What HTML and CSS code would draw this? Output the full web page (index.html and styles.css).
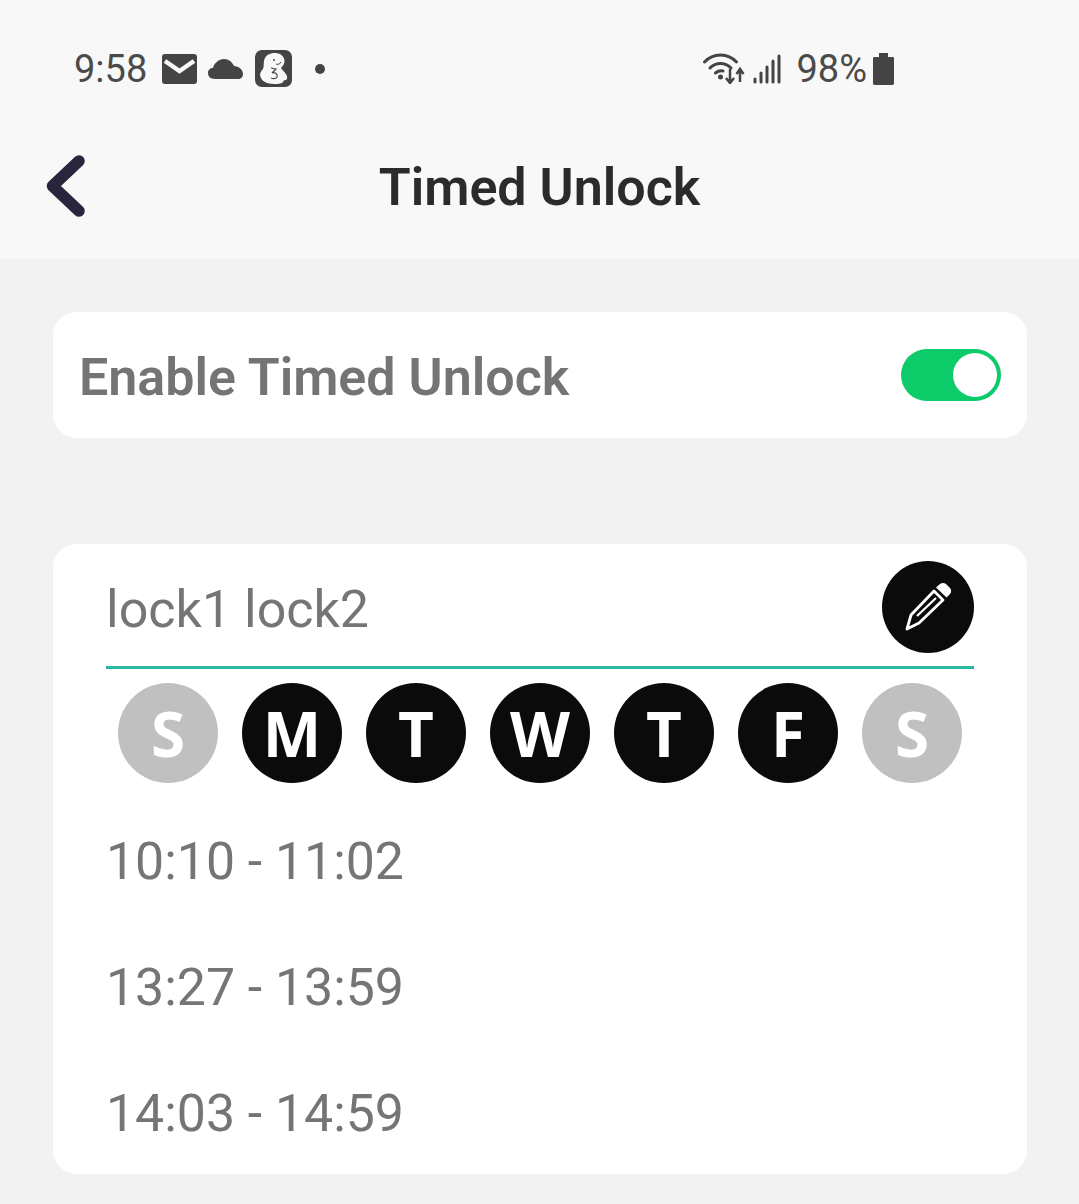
FILE: index.html
```html
<!DOCTYPE html>
<html lang="en">
<head>
  <meta charset="UTF-8">
  <meta name="viewport" content="width=device-width, initial-scale=1.0">
  <title>Timed Unlock</title>
  <link rel="stylesheet" href="styles.css">
</head>
<body>
  <div class="top">
    <div class="status">
      <div class="status-left">
        <span class="clock">9:58</span>
        <svg class="ic-mail" viewBox="0 0 35 30"><rect width="35" height="30" rx="3" fill="#444"/><path d="M3 7 L17.500 17 L32 7" fill="none" stroke="#f8f8f8" stroke-width="4.500"/></svg>
        <svg class="ic-cloud" viewBox="0 0 35 20"><path d="M7 20 C2 20 0 17 0 14 C0 11 2 9 5 9 C6 4 11 0 16 0 C21 0 24 3 26 7 C31 7 35 11 35 15 C35 18 33 20 30 20 Z" fill="#444"/></svg>
        <svg class="ic-app" viewBox="0 0 37 37"><rect width="37" height="37" rx="7" fill="#444"/><path d="M9 11 C10 5 15 3 20 3 C26 3 30 7 29.500 12 C29 15 27 17 26 18 C27 20 30 22 32 26 C33 29 31 31 29 30 C28.500 33 25 34 21 34 C15 34 8 33 6 28 C4 24 6 21 8 19 C9 17 8.500 14 9 11 Z" fill="#f8f8f8"/><path d="M16 18 L21 19 L17 23 C20 22 23 24 22 27 C21 29 18 29 16 28" fill="none" stroke="#444" stroke-width="1.200"/><circle cx="19" cy="10" r="1" fill="#444"/><path d="M21 14 C23 15 25 14 26 12" fill="none" stroke="#444" stroke-width="1"/></svg>
        <span class="dot"></span>
      </div>
      <div class="status-right">
        <svg class="ic-wifi" viewBox="0 0 42 31"><g fill="none" stroke="#444" stroke-width="3" stroke-linecap="round"><path d="M1.500 9 C10 -0.500 25 -0.500 33.500 9"/><path d="M7 15 C13 9 22 9 28 15"/><path d="M12.500 20 C15 18 17 17.500 20 18"/></g><circle cx="17.500" cy="24" r="2.500" fill="#444"/><path d="M27 16 V29 M23 25 L27 30 L31 25 M37 29 V17 M33.500 21 L37 16 L40.500 21" fill="none" stroke="#444" stroke-width="2.500"/></svg>
        <svg class="ic-signal" viewBox="0 0 28 30"><g fill="none" stroke="#444" stroke-width="3" stroke-linecap="round"><path d="M2 25 V28"/><path d="M8 19 V28"/><path d="M14 13 V28"/><path d="M20 7 V28"/><path d="M26 2 V28"/></g></svg>
        <span class="batt-text">98%</span>
        <svg class="ic-batt" viewBox="0 0 21 32"><path d="M6 0 H15 V4 H19.500 C20.500 4 21 4.500 21 5.500 V30 C21 31 20.500 32 19.500 32 H1.500 C0.500 32 0 31 0 30 V5.500 C0 4.500 0.500 4 1.500 4 H6 Z" fill="#444"/></svg>
      </div>
    </div>
    <div class="navbar">
      <svg class="back" viewBox="0 0 40 62"><path d="M33 6 L6.500 31 L33 56" fill="none" stroke="#27263d" stroke-width="11.500" stroke-linecap="round" stroke-linejoin="round"/></svg>
      <h1 class="title">Timed Unlock</h1>
    </div>
  </div>

  <div class="content">
    <div class="card enable-row">
      <span class="enable-label">Enable Timed Unlock</span>
      <div class="toggle"><span class="knob"></span></div>
    </div>

    <div class="card schedule">
      <div class="name-row">
        <span class="lock-name">lock1 lock2</span>
        <div class="edit-btn">
          <svg viewBox="0 0 48 50" width="48" height="50"><g fill="none" stroke="#fff" stroke-width="2.800" stroke-linejoin="round"><path d="M30 9 L39 18 L15 41 L3 47 L7 33 Z"/><path d="M13 34 L32 16" stroke-width="2.200"/></g><path d="M32 5.500 L36 2 C38 0.500 40 0.500 42 2 L46 6 C47.500 8 47.500 10 46 12 L42.500 15.500 Z" fill="#fff"/></svg>
        </div>
      </div>
      <div class="days">
        <span class="day off">S</span>
        <span class="day">M</span>
        <span class="day">T</span>
        <span class="day">W</span>
        <span class="day">T</span>
        <span class="day">F</span>
        <span class="day off">S</span>
      </div>
      <div class="times">
        <div class="time">10:10 - 11:02</div>
        <div class="time">13:27 - 13:59</div>
        <div class="time">14:03 - 14:59</div>
      </div>
    </div>
  </div>
</body>
</html>
```

FILE: styles.css
```css
html, body {
  margin: 0;
  height: 100%;
}

body {
  background-color: #f2f2f2;
  font-family: Roboto, "Liberation Sans", sans-serif;
  overflow: hidden;
}

.top {
  height: 259px;
  background-color: #f8f8f8;
}

.status {
  height: 137px;
  padding: 0 185px 0 74px;
  display: flex;
  justify-content: space-between;
  align-items: center;
  box-sizing: border-box;
}

.status-left, .status-right {
  display: flex;
  align-items: center;
  color: #4a4a4a;
}

.clock {
  font-size: 38px;
  margin-right: 15px;
}

.ic-mail { width: 35px; height: 30px; margin-right: 11px; }
.ic-cloud { width: 35px; height: 20px; margin-right: 12px; }
.ic-app { width: 37px; height: 37px; margin-right: 23px; }

.dot {
  width: 10px;
  height: 10px;
  border-radius: 50%;
  background-color: #444;
}

.ic-wifi { width: 42px; height: 31px; margin-right: 8px; }
.ic-signal { width: 28px; height: 30px; margin-right: 15px; }
.batt-text { font-size: 38px; margin-right: 6px; }
.ic-batt { width: 21px; height: 32px; }

.navbar {
  height: 100px;
  display: flex;
  align-items: center;
  justify-content: center;
  position: relative;
}

.back {
  position: absolute;
  left: 46px;
  top: 18px;
  width: 40px;
  height: 62px;
}

.title {
  margin: 0;
  font-size: 52px;
  font-weight: 600;
  color: #2b2b2e;
}

.content {
  padding: 53px 52px 0 53px;
}

.card {
  background-color: #fff;
  border-radius: 24px;
}

.enable-row {
  height: 126px;
  padding: 0 26px 0 26px;
  display: flex;
  align-items: center;
  justify-content: space-between;
  margin-bottom: 106px;
}

.enable-label {
  font-size: 52px;
  font-weight: 600;
  color: #747474;
  padding-top: 4px;
}

.toggle {
  width: 100px;
  height: 52px;
  background-color: #0ccb68;
  border-radius: 26px;
  position: relative;
}

.knob {
  position: absolute;
  right: 4px;
  top: 4px;
  width: 44px;
  height: 44px;
  border-radius: 50%;
  background-color: #fff;
}

.schedule {
  height: 630px;
  box-sizing: border-box;
  padding: 17px 53px 0 53px;
}

.name-row {
  height: 108px;
  display: flex;
  align-items: center;
  justify-content: space-between;
  border-bottom: 3px solid #2ab9a0;
  box-sizing: border-box;
  padding-bottom: 13px;
}

.lock-name {
  font-size: 52px;
  color: #757575;
  padding-top: 4px;
}

.edit-btn {
  width: 92px;
  height: 92px;
  border-radius: 50%;
  background-color: #0b0b0b;
  display: flex;
  align-items: center;
  justify-content: center;
}

.days {
  display: flex;
  justify-content: center;
  gap: 24px;
  margin-top: 14px;
}

.day {
  width: 100px;
  height: 100px;
  border-radius: 50%;
  background-color: #0b0b0b;
  color: #fff;
  font-family: "Open Sans", sans-serif;
  font-weight: 700;
  font-size: 62px;
  display: flex;
  align-items: center;
  justify-content: center;
}

.day.off {
  background-color: #c0c0c0;
}

.times {
  margin-top: 16px;
}

.time {
  height: 126px;
  line-height: 126px;
  font-size: 51.8px;
  color: #757575;
}
```
